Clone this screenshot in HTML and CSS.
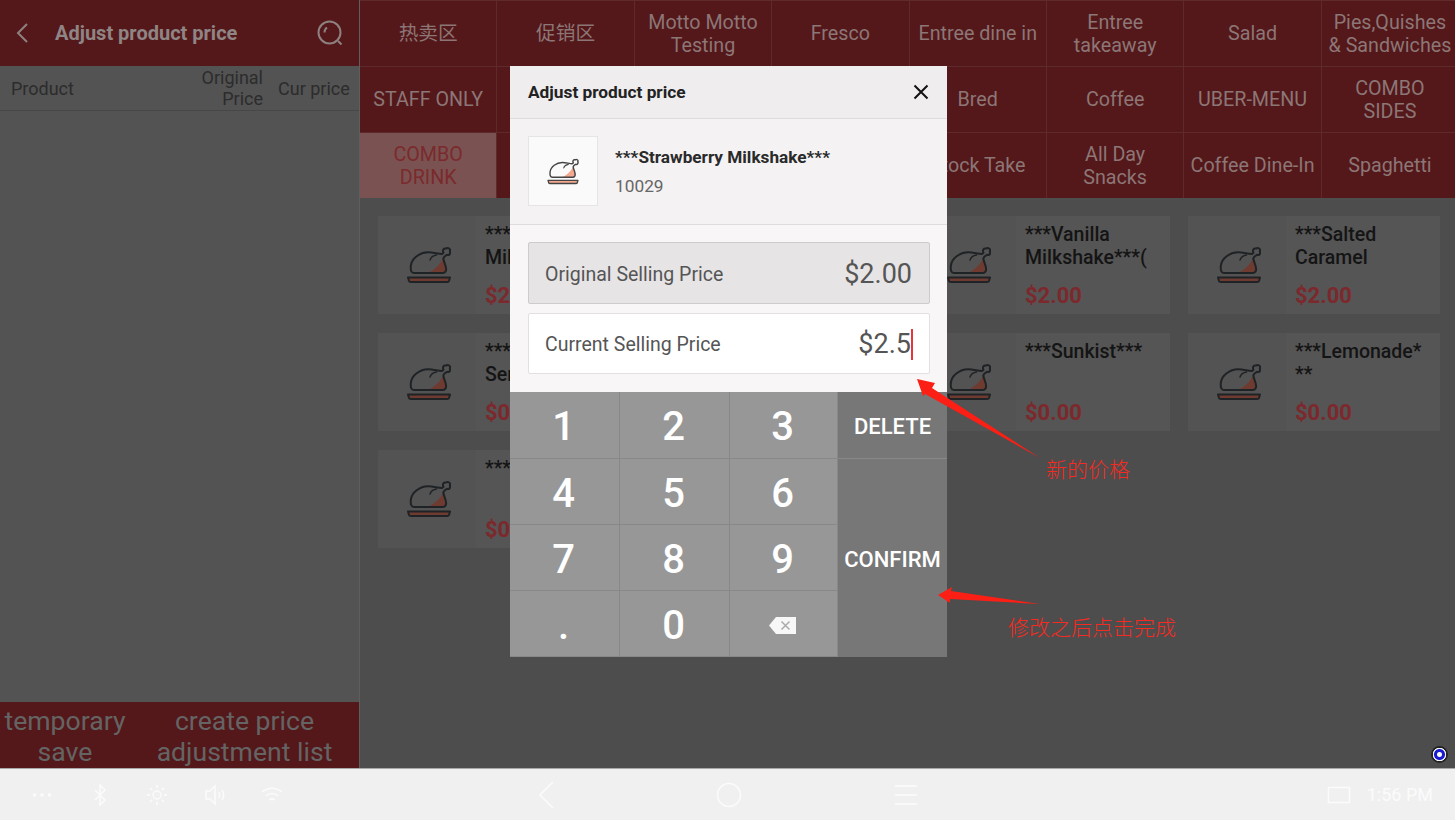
FILE: index.html
```html
<!DOCTYPE html>
<html lang="en">
<head>
    <meta charset="UTF-8">
    <meta name="viewport" content="width=device-width, initial-scale=1.0">
    <title>Adjust product price</title>
    <link rel="stylesheet" href="styles.css">
</head>
<body>
    <svg class="defs" width="0" height="0">
        <symbol id="chicken" viewBox="0 0 44 38">
            <path class="meat" d="M21 27C27 24 32 20 36 13C37 17 38.500 19 39 22C39.500 25 38 27 36 27Z"/>
            <path class="line" d="M7 27C4 27 3.500 24 3.800 20C4.500 12 13 6.500 21 6.300C26 6.200 31 8 35 8L36.500 6.800C35 4 37 1.800 39 2.600C41 1 44 3 42.800 5.500C44 7.500 42 9.800 40 8.800L37.500 10.500L36.300 12.500C37 17 39 19 39 22.500C39.500 25 38 27 36 27Z"/>
            <path class="line thin" d="M29.500 9C26.500 9.500 24 11 23 14"/>
            <path class="meat line" d="M1 31.500H43L42 35C41.800 35.800 41 36 40 36H4C3 36 2.200 35.800 2 35Z"/>
        </symbol>
    </svg>

    <div class="main">
        <aside class="side">
            <header class="side-head">
                <svg class="back-icon" width="14" height="22" viewBox="0 0 14 22"><path d="M12 2L3 11L12 20"/></svg>
                <span class="side-title">Adjust product price</span>
                <svg class="search-icon" width="26" height="26" viewBox="0 0 26 26"><circle cx="12.500" cy="12.500" r="11"/><path d="M7.500 12.500C7.500 10.500 8.500 8.500 10 7.500M21 21L24.500 24.500"/></svg>
            </header>
            <div class="table-head">
                <span class="col-name">Product</span>
                <span class="col-orig">Original Price</span>
                <span class="col-cur">Cur price</span>
            </div>
            <div class="table-body"></div>
            <footer class="side-foot">
                <div class="foot-btn save-btn">temporary save</div>
                <div class="foot-btn list-btn">create price adjustment list</div>
            </footer>
        </aside>

        <section class="shop">
            <nav class="cats">
                <div class="cat">热卖区</div>
                <div class="cat">促销区</div>
                <div class="cat">Motto Motto<br>Testing</div>
                <div class="cat">Fresco</div>
                <div class="cat">Entree dine in</div>
                <div class="cat">Entree<br>takeaway</div>
                <div class="cat">Salad</div>
                <div class="cat">Pies,Quishes<br>&amp; Sandwiches</div>

                <div class="cat">STAFF ONLY</div>
                <div class="cat"></div>
                <div class="cat"></div>
                <div class="cat"></div>
                <div class="cat">Bred</div>
                <div class="cat">Coffee</div>
                <div class="cat">UBER-MENU</div>
                <div class="cat">COMBO<br>SIDES</div>

                <div class="cat active">COMBO<br>DRINK</div>
                <div class="cat"></div>
                <div class="cat"></div>
                <div class="cat"></div>
                <div class="cat">Stock Take</div>
                <div class="cat">All Day<br>Snacks</div>
                <div class="cat">Coffee Dine-In</div>
                <div class="cat">Spaghetti</div>
            </nav>

            <div class="products">
                <div class="card">
                    <div class="card-img"><svg class="chicken"><use href="#chicken"/></svg></div>
                    <div class="card-info"><div class="card-name">***Strawberry Milkshake***</div><div class="card-price">$2.00</div></div>
                </div>
                <div class="card">
                    <div class="card-img"><svg class="chicken"><use href="#chicken"/></svg></div>
                    <div class="card-info"></div>
                </div>
                <div class="card">
                    <div class="card-img"><svg class="chicken"><use href="#chicken"/></svg></div>
                    <div class="card-info"><div class="card-name">***Vanilla Milkshake***(</div><div class="card-price">$2.00</div></div>
                </div>
                <div class="card">
                    <div class="card-img"><svg class="chicken"><use href="#chicken"/></svg></div>
                    <div class="card-info"><div class="card-name">***Salted Caramel</div><div class="card-price">$2.00</div></div>
                </div>

                <div class="card">
                    <div class="card-img"><svg class="chicken"><use href="#chicken"/></svg></div>
                    <div class="card-info"><div class="card-name">***<br>Service</div><div class="card-price">$0.00</div></div>
                </div>
                <div class="card">
                    <div class="card-img"><svg class="chicken"><use href="#chicken"/></svg></div>
                    <div class="card-info"></div>
                </div>
                <div class="card">
                    <div class="card-img"><svg class="chicken"><use href="#chicken"/></svg></div>
                    <div class="card-info"><div class="card-name">***Sunkist***</div><div class="card-price">$0.00</div></div>
                </div>
                <div class="card">
                    <div class="card-img"><svg class="chicken"><use href="#chicken"/></svg></div>
                    <div class="card-info"><div class="card-name">***Lemonade*<br>**</div><div class="card-price">$0.00</div></div>
                </div>

                <div class="card">
                    <div class="card-img"><svg class="chicken"><use href="#chicken"/></svg></div>
                    <div class="card-info"><div class="card-name">***</div><div class="card-price">$0.00</div></div>
                </div>
            </div>
        </section>
    </div>

    <div class="navbar">
        <div class="nav-left">
            <svg width="24" height="24" viewBox="0 0 24 24"><path class="dots" d="M3 12H6M10.500 12H13.500M18 12H21"/></svg>
            <svg width="24" height="24" viewBox="0 0 24 24"><path d="M7 7L17 17L12 22V2L17 7L7 17"/></svg>
            <svg width="24" height="24" viewBox="0 0 24 24"><circle cx="12" cy="12" r="4"/><path d="M12 2V5M12 19V22M2 12H5M19 12H22M5 5L7 7M17 17L19 19M5 19L7 17M17 7L19 5"/></svg>
            <svg width="24" height="24" viewBox="0 0 24 24"><path d="M3 8V16H7L12 21V3L7 8ZM16 9C17 11 17 13 16 15M19 7C21 10 21 14 19 17"/></svg>
            <svg width="24" height="24" viewBox="0 0 24 24"><path d="M2 9C8 4 16 4 22 9M5.500 13C9.500 10 14.500 10 18.500 13M9 17C11 15.500 13 15.500 15 17M12 20.500V21"/></svg>
        </div>
        <div class="nav-mid">
            <svg width="22" height="30" viewBox="0 0 22 30"><path d="M18 2L5 15L18 28"/></svg>
            <svg class="home-icon" width="28" height="28" viewBox="0 0 28 28"><circle cx="14" cy="14" r="11.500"/></svg>
            <svg class="menu-icon" width="26" height="24" viewBox="0 0 26 24"><path d="M2 3H24M2 12H24M2 21H24"/></svg>
        </div>
        <div class="nav-right">
            <svg width="24" height="18" viewBox="0 0 24 18"><path d="M1.500 1.500H22.500V16.500H1.500Z"/></svg>
            <span class="clock">1:56 PM</span>
        </div>
    </div>

    <div class="modal">
        <div class="modal-head">
            <span>Adjust product price</span>
            <svg class="close-icon" width="16" height="16" viewBox="0 0 16 16"><path d="M1.500 1.500L14.500 14.500M14.500 1.500L1.500 14.500"/></svg>
        </div>
        <div class="modal-product">
            <div class="thumb"><svg class="chicken small"><use href="#chicken"/></svg></div>
            <div>
                <div class="modal-name">***Strawberry Milkshake***</div>
                <div class="modal-code">10029</div>
            </div>
        </div>
        <div class="modal-fields">
            <div class="field readonly"><span>Original Selling Price</span><span class="field-val">$2.00</span></div>
            <div class="field"><span>Current Selling Price</span><span class="field-val caret">$2.5</span></div>
        </div>
        <div class="keypad">
            <div class="key">1</div>
            <div class="key">2</div>
            <div class="key">3</div>
            <div class="key action">DELETE</div>
            <div class="key">4</div>
            <div class="key">5</div>
            <div class="key">6</div>
            <div class="key action confirm">CONFIRM</div>
            <div class="key">7</div>
            <div class="key">8</div>
            <div class="key">9</div>
            <div class="key">.</div>
            <div class="key">0</div>
            <div class="key">
                <svg width="27" height="17" viewBox="0 0 27 17"><path class="bksp" d="M7 0H27V17H7L0 8.500Z"/><path class="bksp-x" d="M12.500 4.500L20.500 12.500M20.500 4.500L12.500 12.500"/></svg>
            </div>
        </div>
    </div>

    <!-- red notes drawn on top of the screenshot -->
    <svg class="arrows" width="1455" height="820" viewBox="0 0 1455 820">
        <polygon points="917,379 935,383 932,388 1040,458 925,394 923,396"/>
        <polygon points="938,595 952,587 951,591 1040,604 950,599 950,603"/>
    </svg>
    <div class="note note-new">新的价格</div>
    <div class="note note-done">修改之后点击完成</div>

    <div class="float-dot"></div>
</body>
</html>
```

FILE: styles.css
```css
* {
    margin: 0;
    padding: 0;
    box-sizing: border-box;
}
body {
    position: relative;
    width: 1455px;
    height: 820px;
    overflow: hidden;
    font-family: Roboto, "Noto Sans CJK SC", sans-serif;
    background-color: #4d4d4d;
}
.defs {
    position: absolute;
}
.main {
    display: flex;
    height: 768px;
    overflow: hidden;
}

/* left panel */
.side {
    display: flex;
    flex-direction: column;
    width: 360px;
    flex-shrink: 0;
    background-color: #535353;
    border-right: 1px solid #5e5e5e;
}
.side-head {
    display: flex;
    align-items: center;
    height: 66px;
    padding: 0 15px;
    background-color: #54181a;
    flex-shrink: 0;
}
.back-icon path {
    fill: none;
    stroke: #8f8080;
    stroke-width: 2;
}
.side-title {
    flex: 1;
    margin-left: 26px;
    font-size: 20px;
    font-weight: 700;
    color: #8f8585;
}
.search-icon {
    margin-right: 1px;
}
.search-icon circle, .search-icon path {
    fill: none;
    stroke: #8f8080;
    stroke-width: 2;
}
.table-head {
    display: flex;
    align-items: center;
    height: 45px;
    padding: 0 10px 0 11px;
    border-bottom: 1px solid #474747;
    font-size: 18px;
    line-height: 21px;
    color: #2c2c2c;
    flex-shrink: 0;
}
.col-name {
    flex: 1;
}
.col-orig {
    width: 70px;
    text-align: right;
}
.col-cur {
    width: 71px;
    margin-left: 15px;
    white-space: nowrap;
}
.table-body {
    flex: 1;
}
.side-foot {
    display: flex;
    height: 66px;
    padding-top: 3px;
    background-color: #54181a;
    flex-shrink: 0;
    font-size: 26.600px;
    line-height: 31px;
    color: #646464;
    text-align: center;
}
.save-btn {
    width: 130px;
}
.list-btn {
    flex: 1;
}

/* category tabs */
.shop {
    flex: 1;
}
.cats {
    display: grid;
    grid-template-columns: repeat(8, 137.400px);
    grid-auto-rows: 66px;
    background-color: #54181a;
}
.cat {
    display: flex;
    align-items: center;
    justify-content: center;
    text-align: center;
    font-size: 19.700px;
    line-height: 23px;
    white-space: nowrap;
    color: #8c7676;
    border-right: 1px solid #5f2a2c;
    border-top: 1px solid #5f2a2c;
}
.cat.active {
    background-color: #7a5252;
    color: #7b2a2c;
}

/* product cards */
.products {
    display: grid;
    grid-template-columns: repeat(4, 252px);
    grid-auto-rows: 98px;
    gap: 19px 18px;
    padding: 18px 18px;
}
.card {
    display: flex;
    background-color: #555555;
}
.card-img {
    display: flex;
    align-items: center;
    justify-content: center;
    width: 98px;
    padding-left: 4px;
    flex-shrink: 0;
    background-color: #535353;
}
.chicken {
    width: 44px;
    height: 38px;
    --meat: #6f3b30;
    color: #1f2326;
}
.chicken.small {
    width: 32px;
    height: 27px;
    --meat: #f3a98f;
    color: #444444;
}
.meat {
    fill: var(--meat);
}
.line {
    stroke: currentColor;
    stroke-width: 2;
    stroke-linejoin: round;
    stroke-linecap: round;
}
path.line:not(.meat) {
    fill: none;
}
.thin {
    stroke-width: 1.500;
}
.card-info {
    display: flex;
    flex-direction: column;
    justify-content: space-between;
    flex: 1;
    padding: 7px 9px 6px;
    overflow: hidden;
}
.card-name {
    font-size: 19.500px;
    font-weight: 500;
    line-height: 23px;
    color: #141414;
}
.card-price {
    font-size: 22px;
    font-weight: 700;
    color: #7c282c;
}

/* android nav bar */
.navbar {
    position: relative;
    display: flex;
    align-items: center;
    height: 52px;
    background-color: #f0f0f0;
    border-top: 1px solid #a8a8a8;
}
.navbar svg path, .navbar svg circle {
    fill: none;
    stroke: #fbfbfb;
    stroke-width: 1.500;
}
.navbar svg .dots {
    stroke-width: 3;
}
.nav-left {
    display: flex;
    gap: 33.500px;
    margin-left: 30px;
    width: 505px;
}
.nav-mid {
    display: flex;
    align-items: center;
}
.home-icon {
    margin-left: 158px;
}
.menu-icon {
    margin-left: 150px;
}
.nav-right {
    display: flex;
    align-items: center;
    gap: 16px;
    margin-left: auto;
    margin-right: 22px;
}
.clock {
    font-size: 18px;
    color: #fbfbfb;
}

/* dialog */
.modal {
    position: absolute;
    left: 510px;
    top: 66px;
    width: 437px;
    border-radius: 2px 2px 0 0;
    background-color: #f8f6f7;
}
.modal-head {
    display: flex;
    align-items: center;
    justify-content: space-between;
    height: 53px;
    padding: 0 18px;
    font-size: 17.300px;
    font-weight: 700;
    color: #222222;
    background-color: #efedee;
    border-bottom: 1px solid #dedcdd;
}
.close-icon path {
    stroke: #111111;
    stroke-width: 2;
}
.modal-product {
    display: flex;
    align-items: center;
    gap: 17px;
    height: 106px;
    padding: 0 18px 1px;
    background-color: #f4f2f3;
    border-bottom: 1px solid #dedcdd;
}
.thumb {
    display: flex;
    align-items: center;
    justify-content: center;
    width: 70px;
    height: 70px;
    background-color: #fafafa;
    border: 1px solid #e6e4e5;
}
.modal-name {
    font-size: 17.200px;
    font-weight: 700;
    color: #2a2a2a;
}
.modal-code {
    margin-top: 9px;
    font-size: 17.300px;
    color: #666666;
}
.modal-fields {
    display: flex;
    flex-direction: column;
    gap: 9px;
    height: 167px;
    padding: 17px 17px 0 18px;
}
.field {
    display: flex;
    align-items: center;
    justify-content: space-between;
    height: 61px;
    padding: 2px 17px 0 16px;
    font-size: 19.500px;
    color: #555555;
    background-color: #ffffff;
    border: 1px solid #e2e0e1;
    border-radius: 2px;
}
.field.readonly {
    height: 62px;
    background-color: #e6e4e5;
    border-color: #cdcbcc;
}
.field-val {
    font-size: 27px;
}
.caret {
    border-right: 2px solid #e8353c;
    line-height: 31px;
    margin-right: -1px;
}

/* keypad */
.keypad {
    display: grid;
    grid-template-columns: 110px 110px 108px 109px;
    grid-template-rows: 67px 66px 66px 66px;
}
.key {
    display: flex;
    align-items: center;
    justify-content: center;
    padding: 3px 2px 0 0;
    font-size: 40px;
    font-weight: 500;
    color: #ffffff;
    background-color: #979797;
    border-right: 1px solid #888888;
    border-bottom: 1px solid #888888;
}
.key.action {
    padding: 2px 0 0;
    font-size: 22px;
    background-color: #777777;
    border-right: none;
}
.key.confirm {
    grid-column: 4;
    grid-row: 2 / span 3;
    border-bottom: none;
}
.bksp {
    fill: #f7f7f7;
}
.bksp-x {
    fill: none;
    stroke: #aaaaaa;
    stroke-width: 1.500;
}

/* annotations */
.arrows {
    position: absolute;
    left: 0;
    top: 0;
    pointer-events: none;
}
.arrows polygon {
    fill: #fb1f16;
}
.note {
    position: absolute;
    font-size: 21px;
    font-weight: 300;
    line-height: 26px;
    color: #f52a22;
    white-space: nowrap;
}
.note-new {
    left: 1046px;
    top: 457px;
}
.note-done {
    left: 1008px;
    top: 615px;
}
.float-dot {
    position: absolute;
    left: 1431px;
    top: 746px;
    width: 17px;
    height: 17px;
    border-radius: 50%;
    background: radial-gradient(circle, #ffffff 0 2px, #1a1ad0 3px 5px, #f4f4f4 6px 6.500px, #222222 7px);
}
```
